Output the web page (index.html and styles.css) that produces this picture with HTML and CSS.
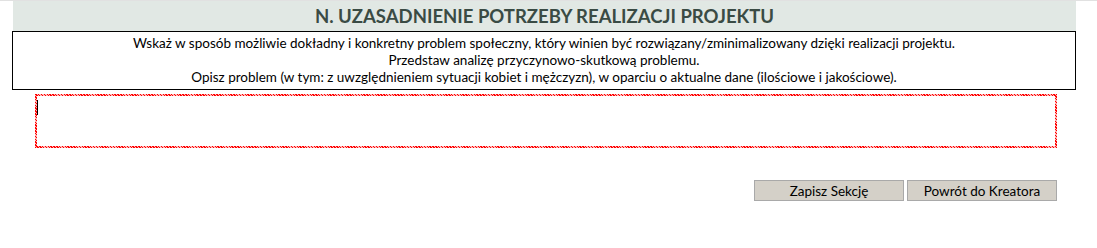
FILE: index.html
```html
<!DOCTYPE html>
<html lang="pl">
<head>
<meta charset="utf-8">
<title>N. Uzasadnienie potrzeby realizacji projektu</title>
<link rel="stylesheet" href="styles.css">
</head>
<body>
<div class="topline"></div>
<div class="section">
  <div class="header">N. UZASADNIENIE POTRZEBY REALIZACJI PROJEKTU</div>
  <div class="info">
    <div>Wskaż w sposób możliwie dokładny i konkretny problem społeczny, który winien być rozwiązany/zminimalizowany dzięki realizacji projektu.</div>
    <div>Przedstaw analizę przyczynowo-skutkową problemu.</div>
    <div>Opisz problem (w tym: z uwzględnieniem sytuacji kobiet i mężczyzn), w oparciu o aktualne dane (ilościowe i jakościowe).</div>
  </div>
  <div class="field"><span class="caret"></span></div>
  <div class="actions">
    <button class="btn">Zapisz Sekcję</button>
    <button class="btn">Powrót do Kreatora</button>
  </div>
</div>
</body>
</html>
```
FILE: styles.css
```css
html, body {
  margin: 0;
  padding: 0;
  background: #ffffff;
  font-family: Lato, "Open Sans", "Liberation Sans", sans-serif;
}
.topline {
  height: 1px;
  background: #e1e1e1;
}
.section {
  width: 1064px;
  margin-left: 12px;
  display: flex;
  flex-direction: column;
}
.header {
  margin-left: 1px;
  height: 30px;
  background: #e1e8e4;
  color: #3a4b44;
  font-weight: bold;
  font-size: 18.5px;
  line-height: 31px;
  text-align: center;
}
.info {
  border: 1px solid #000;
  padding: 3px 0 3px;
  font-size: 13.5px;
  line-height: 17px;
  text-align: center;
  color: #000;
}
.field {
  margin: 4px 19px 0 23px;
  height: 50px;
  border: 2px solid #ff0000;
  border-image: repeating-linear-gradient(45deg, #ff0000 0 1px, #ffb8b8 1px 2px) 2;
  position: relative;
}
.caret {
  position: absolute;
  left: 0;
  top: 4px;
  width: 1px;
  height: 15px;
  background: #000;
}
.actions {
  display: flex;
  justify-content: flex-end;
  gap: 3px;
  margin: 32px 19px 0 0;
}
.btn {
  width: 150px;
  height: 21px;
  padding: 0;
  background: #d4d0c8;
  border: 1px solid #a9a9a9;
  font-family: Lato, "Open Sans", "Liberation Sans", sans-serif;
  font-size: 13.5px;
  color: #000;
}
```
